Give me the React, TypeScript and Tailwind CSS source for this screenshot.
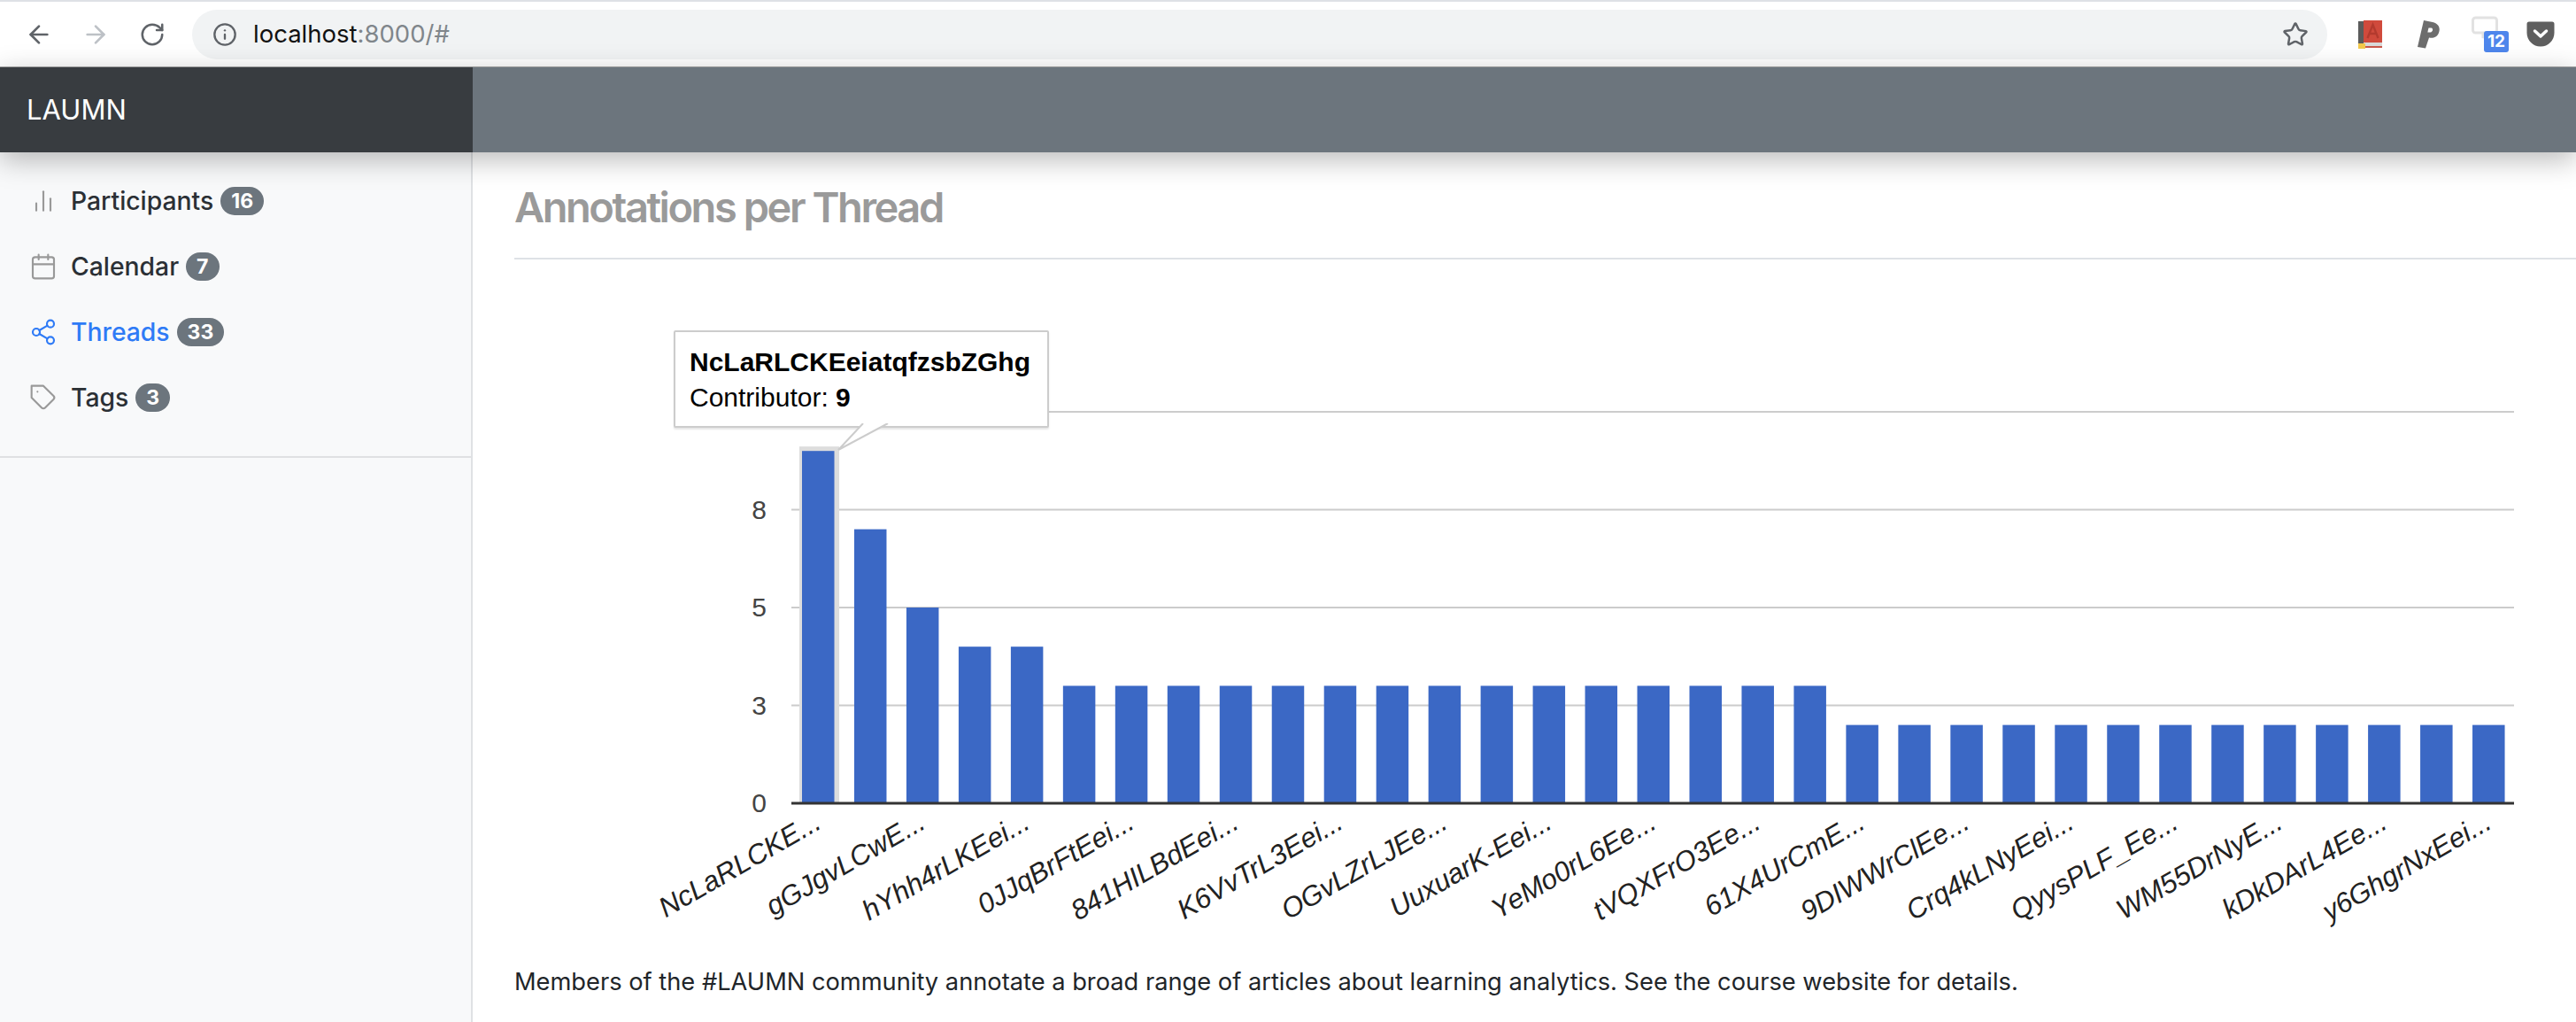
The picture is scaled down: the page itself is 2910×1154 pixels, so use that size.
import React from "react";
import { FiBarChart2, FiCalendar, FiShare2, FiTag } from "react-icons/fi";
import { ArrowLeft, ArrowRight, RotateCw, Star, Info } from "lucide-react";

const values = [9, 7, 5, 4, 4, ...Array(15).fill(3), ...Array(13).fill(2)];
const labels = [
  "NcLaRLCKE...", "gGJgvLCwE...", "hYhh4rLKEei...", "0JJqBrFtEei...", "841HILBdEei...", "K6VvTrL3Eei...",
  "OGvLZrLJEe...", "UuxuarK-Eei...", "YeMo0rL6Ee...", "tVQXFrO3Ee...", "61X4UrCmE...", "9DIWWrClEe...",
  "Crq4kLNyEei...", "QyysPLF_Ee...", "WM55DrNyE...", "kDkDArL4Ee...", "y6GhgrNxEei...",
];
const nav = [
  { name: "Participants", n: 16, Icon: FiBarChart2 },
  { name: "Calendar", n: 7, Icon: FiCalendar },
  { name: "Threads", n: 33, Icon: FiShare2, active: true },
  { name: "Tags", n: 3, Icon: FiTag },
];

// chart svg origin is x=581, y=294 on the page
const OX = 581, OY = 294;
const axisY = 908 - OY;
const unit = 44.2;
const left = 894 - OX;
const step = 58.97;

function Chart() {
  return (
    <svg width={2329} height={780} className="block" style={{ fontFamily: '"Liberation Sans", Arial, sans-serif' }}>
      {[2.5, 5, 7.5, 10].map((v) => (
        <line key={v} x1={left} x2={2840 - OX} y1={axisY - v * unit} y2={axisY - v * unit} stroke="#cccccc" strokeWidth={2} />
      ))}
      {[["0", 0], ["3", 2.5], ["5", 5], ["8", 7.5]].map(([t, v]) => (
        <text key={t} x={866 - OX} y={axisY - (v as number) * unit + 10} textAnchor="end" fontSize={30} fill="#444444">{t}</text>
      ))}
      <rect x={left + 9} y={axisY - 9 * unit - 5} width={45} height={9 * unit + 5} fill="#dddddd" />
      {values.map((v, i) => (
        <rect key={i} x={left + i * step + 12} y={axisY - v * unit} width={36.5} height={v * unit} fill="#3b68c5" />
      ))}
      <line x1={left} x2={2840 - OX} y1={axisY} y2={axisY} stroke="#333333" strokeWidth={3} />
      {labels.map((t, i) => (
        <text key={t} transform={`translate(${left + (i * 2 + 0.5) * step + 6} ${axisY + 27}) rotate(-30)`} textAnchor="end" fontSize={31.5} fontStyle="italic" fill="#222222">{t}</text>
      ))}
    </svg>
  );
}

function Extensions() {
  return (
    <div className="flex items-center">
      <svg width={28} height={32} viewBox="0 0 28 32" className="ml-[34px]">
        <rect x="1" y="1" width="7" height="27" fill="#5b5b5b" />
        <rect x="7" y="0" width="21" height="25" fill="#d04a3c" />
        <rect x="7" y="25" width="21" height="6" fill="#d9d9d9" />
        <rect x="7" y="29" width="21" height="2" fill="#c9584b" />
        <rect x="1" y="26" width="8" height="6" fill="#f2c84b" />
        <path d="M11.500 20 L17.500 5 L23.500 20 M13.500 15 H21.500" stroke="#b33a2e" strokeWidth="2.400" fill="none" />
      </svg>
      <svg width={26} height={32} viewBox="0 0 26 32" className="ml-[39px]">
        <path d="M8 0 L18 2 C25 3.500 27 9 25 14 C23 19.500 18 20.500 14 19.500 L10 31.500 L1 30 Z" fill="#6d6d6d" />
        <path d="M13.500 8.500 L16.500 8.500 C19 9 18.500 13 15.500 13.500 L12.300 13.500 Z" fill="#ffffff" />
      </svg>
      <div className="relative ml-[36px] h-[42px] w-[43px]">
        <svg width={30} height={27} viewBox="0 0 30 27" className="absolute left-0 top-0">
          <path d="M4.500 2 H25.500 A3 3 0 0 1 28.500 5 V16 A3 3 0 0 1 25.500 19 H15 L13 25 V19 H4.500 A3 3 0 0 1 1.500 16 V5 A3 3 0 0 1 4.500 2 Z" fill="#ffffff" stroke="#e2e2e2" strokeWidth="3" />
        </svg>
        <div className="absolute left-[14px] top-[17px] flex h-[24px] w-[28px] items-center justify-center rounded-[3px] bg-[#4e86ec] text-[19px] font-bold leading-none text-white">12</div>
      </div>
      <svg width={32} height={29} viewBox="0 0 32 29" className="ml-[19px]">
        <path d="M3 0.500 H29 A2.500 2.500 0 0 1 31.500 3 V13 A15.500 15.500 0 0 1 0.500 13 V3 A2.500 2.500 0 0 1 3 0.500 Z" fill="#5f5f5f" />
        <path d="M9.500 11 L16 17 L22.500 11" stroke="#ffffff" strokeWidth="3.500" fill="none" strokeLinecap="round" strokeLinejoin="round" />
      </svg>
    </div>
  );
}

export default function App() {
  return (
    <div className="flex h-[1154px] w-[2910px] flex-col overflow-hidden bg-white font-['Inter',sans-serif] text-[#212529]">
      <div className="flex h-[76px] shrink-0 items-center border-t-2 border-t-[#dee1e6] border-b border-b-[#a8a8a8] bg-white">
        <div className="flex items-center pl-[28px]">
          <ArrowLeft size={32} strokeWidth={2} className="text-[#5f6368]" />
          <ArrowRight size={32} strokeWidth={2} className="ml-[32px] text-[#bdc1c6]" />
          <RotateCw size={30} strokeWidth={2} className="ml-[33px] text-[#5f6368]" />
        </div>
        <div className="ml-[30px] flex h-[56px] w-[2412px] shrink-0 items-center rounded-full bg-[#f1f3f4] pl-[23px] pr-[21px]">
          <Info size={28} strokeWidth={2} className="text-[#5f6368]" />
          <div className="ml-[18px] text-[27.5px] text-[#111111]">localhost<span className="text-[#80868b]">:8000/#</span></div>
          <Star size={30} strokeWidth={2} className="ml-auto text-[#5f6368]" />
        </div>
        <Extensions />
      </div>

      <div className="relative z-10 flex h-[96px] shrink-0 shadow-[0_8px_30px_rgba(0,0,0,0.28)]">
        <div className="flex w-[534px] items-center bg-[#383c40] pl-[30px] text-[31px] text-white">LAUMN</div>
        <div className="flex-1 bg-[#6c757d]" />
      </div>

      <div className="flex min-h-0 flex-1">
        <aside className="w-[534px] shrink-0 border-r-2 border-r-[#dfe1e4] bg-[#f8f9fa]">
          <nav className="flex h-[345px] flex-col border-b-2 border-b-[#dfe0e2] pt-[18px]">
            {nav.map(({ name, n, Icon, active }) => (
              <div key={name} className={`flex h-[74px] items-center pl-[33px] text-[28.3px] font-medium ${active ? "text-[#2f7bf6]" : "text-[#2b3035]"}`}>
                <Icon size={32} strokeWidth={1.6} className={active ? "text-[#2f7bf6]" : "text-[#999999]"} />
                <span className="ml-[15px]">{name}</span>
                <span className="ml-[8px] flex h-[32px] items-center rounded-[16px] bg-[#6c757d] px-[12px] text-[23px] font-bold leading-none text-white">{n}</span>
              </div>
            ))}
          </nav>
        </aside>
        <main className="min-w-0 flex-1 pl-[47px]">
          <h1 className="flex h-[121px] items-center border-b-2 border-b-[#dee2e6] pt-[6px] text-[47px] font-semibold tracking-[-2.45px] text-[#9a9a9a]">Annotations per Thread</h1>
          <div className="relative">
            <Chart />
            <div className="absolute left-[180px] top-[80px] w-[424px] rounded-[2px] border-2 border-[#cccccc] bg-white px-[16px] pb-[12px] pt-[14px] font-['Liberation_Sans',Arial,sans-serif] text-[30px] leading-[40px] text-black shadow-[0_2px_2px_rgba(0,0,0,0.1)]">
              <div className="font-bold">NcLaRLCKEeiatqfzsbZGhg</div>
              <div>Contributor: <span className="font-bold">9</span></div>
            </div>
            <svg width={60} height={32} viewBox="0 0 60 32" className="absolute left-[364px] top-[185px]">
              <path d="M30 0 L2 30 L58 0" fill="#ffffff" stroke="#cccccc" strokeWidth="2" />
            </svg>
          </div>
          <p className="pt-[16px] text-[27.25px] leading-[40px]">Members of the #LAUMN community annotate a broad range of articles about learning analytics. See the course website for details.</p>
        </main>
      </div>
    </div>
  );
}
